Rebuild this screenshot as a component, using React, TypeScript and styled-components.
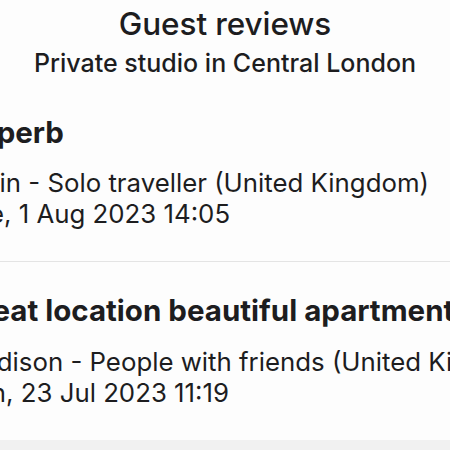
import React from "react";
import styled, { createGlobalStyle } from "styled-components";

const Global = createGlobalStyle`
  html, body { margin: 0; padding: 0; background: #fdfdfd; }
  body { width: 450px; height: 450px; overflow: hidden; font-family: Inter, "Liberation Sans", sans-serif; color: #1d1d1f; }
`;

const Page = styled.div`
  width: 450px;
  height: 450px;
  overflow: hidden;
  display: flex;
  flex-direction: column;
`;

const Header = styled.header`
  display: flex;
  flex-direction: column;
  align-items: center;
  padding-top: 4.5px;
`;

const Title = styled.h1`
  margin: 0;
  font-size: 31.5px;
  line-height: 38px;
  font-weight: 500;
  letter-spacing: -0.1px;
`;

const Subtitle = styled.h2`
  margin: 2px 0 0;
  font-size: 25px;
  line-height: 37px;
  font-weight: 500;
`;

const List = styled.div`
  display: flex;
  flex-direction: column;
  margin-top: 2px;
`;

const Review = styled.article<{ $divider?: boolean }>`
  display: flex;
  flex-direction: column;
  padding: 31px 0 32px;
  margin-left: -41px;
  border-bottom: ${(p) => (p.$divider ? "1.5px solid #e4e4e4" : "none")};
  width: 491px;
`;

const ReviewTitle = styled.h3`
  margin: 0 0 18.5px;
  font-size: 29.5px;
  line-height: 34px;
  font-weight: 700;
  white-space: nowrap;
`;

const Meta = styled.div`
  font-size: 25.8px;
  line-height: 31px;
  font-weight: 400;
  white-space: nowrap;
`;

const BottomBand = styled.div`
  flex: 1;
  background: #f1f1f1;
`;

const reviews = [
  {
    title: "Superb",
    who: "Colin - Solo traveller (United Kingdom)",
    date: "Tue, 1 Aug 2023 14:05",
  },
  {
    title: "Great location beautiful apartment",
    who: "Madison - People with friends (United Kingdom)",
    date: "Sun, 23 Jul 2023 11:19",
  },
];

export default function App() {
  return (
    <Page>
      <Global />
      <Header>
        <Title>Guest reviews</Title>
        <Subtitle>Private studio in Central London</Subtitle>
      </Header>
      <List>
        {reviews.map((r, i) => (
          <Review key={r.title} $divider={i < reviews.length - 1}>
            <ReviewTitle>{r.title}</ReviewTitle>
            <Meta>{r.who}</Meta>
            <Meta>{r.date}</Meta>
          </Review>
        ))}
      </List>
      <BottomBand />
    </Page>
  );
}
